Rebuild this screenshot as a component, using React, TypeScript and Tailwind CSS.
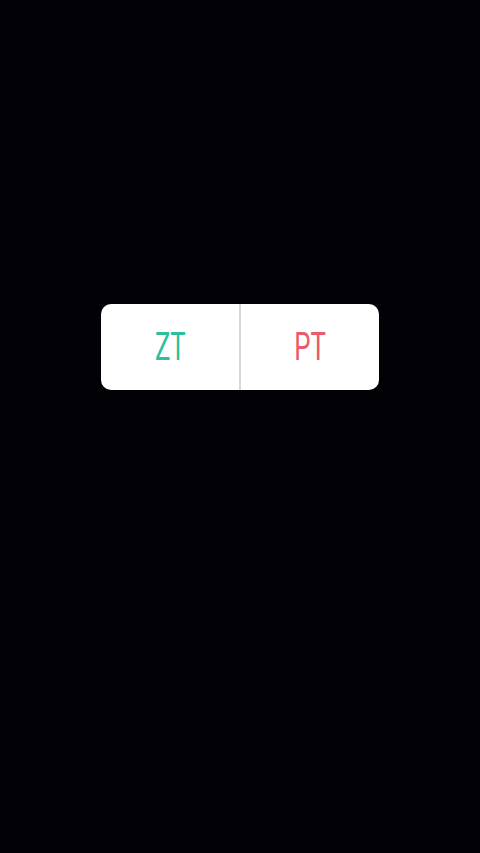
export default function App() {
  return (
    <div className="min-h-[853px] w-full bg-[#020206] pt-[304px]">
      <div className="mx-auto flex h-[86px] w-[278px] overflow-hidden rounded-[10px] bg-white">
        <div className="flex flex-1 items-center justify-center">
          <span
            className="inline-block scale-x-[0.66] text-[39px] font-normal leading-none text-[#2bbf9d]"
            style={{ fontFamily: "Roboto, 'Liberation Sans', sans-serif" }}
          >
            ZT
          </span>
        </div>
        <div className="w-[2px] bg-[#d8d8d8]" />
        <div className="flex flex-1 items-center justify-center">
          <span
            className="inline-block scale-x-[0.66] text-[39px] font-normal leading-none text-[#ec5a6c]"
            style={{ fontFamily: "Roboto, 'Liberation Sans', sans-serif" }}
          >
            PT
          </span>
        </div>
      </div>
    </div>
  );
}
